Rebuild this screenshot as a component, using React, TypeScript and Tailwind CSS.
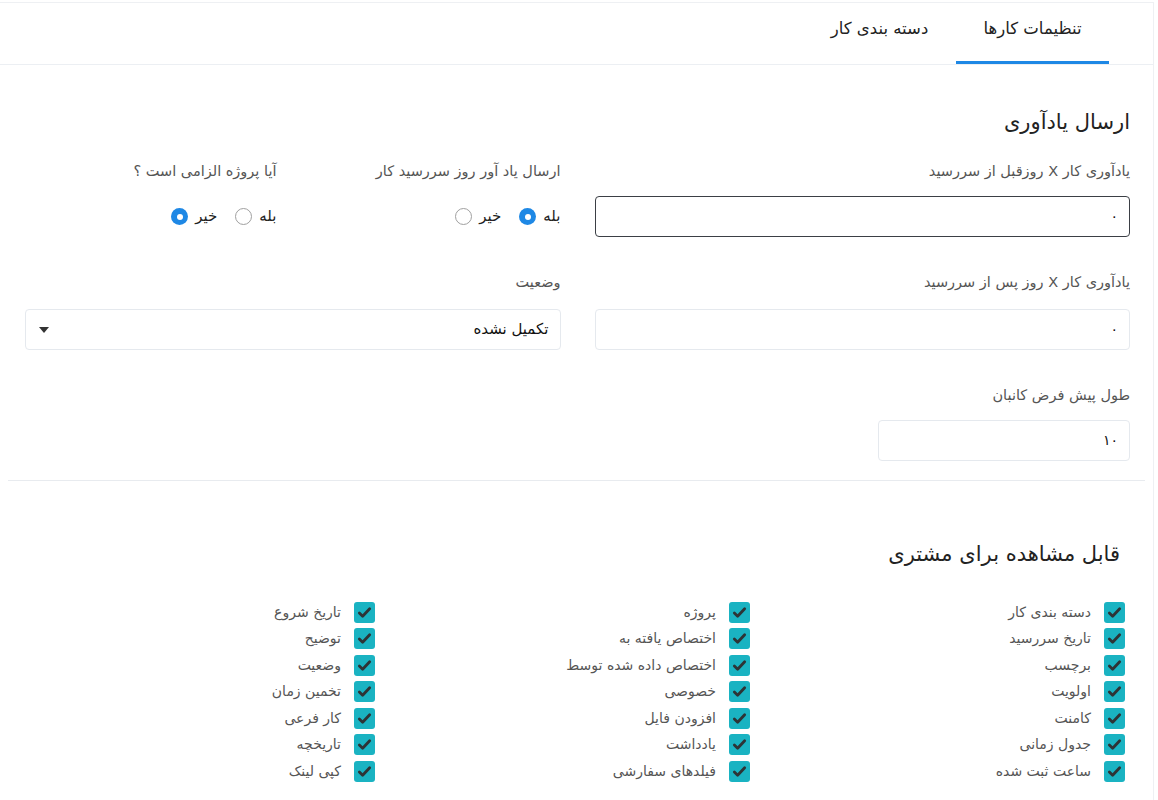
import React, { useState } from "react";

const font = { fontFamily: '"DejaVu Sans", "Noto Sans", sans-serif' };

const visibleCols: string[][] = [
  ["دسته بندی کار", "تاریخ سررسید", "برچسب", "اولویت", "کامنت", "جدول زمانی", "ساعت ثبت شده"],
  ["پروژه", "اختصاص یافته به", "اختصاص داده شده توسط", "خصوصی", "افزودن فایل", "یادداشت", "فیلدهای سفارشی"],
  ["تاریخ شروع", "توضیح", "وضعیت", "تخمین زمان", "کار فرعی", "تاریخچه", "کپی لینک"],
];

const Radio = ({ checked, label }: { checked?: boolean; label: string }) => (
  <label className="flex items-center gap-[7px] text-[15px] text-[#222]">
    <span>{label}</span>
    <span
      className={
        checked
          ? "w-[17px] h-[17px] rounded-full bg-[#1e88e5] flex items-center justify-center"
          : "w-[17px] h-[17px] rounded-full border border-[#a0a0a0] bg-white"
      }
    >
      {checked && <span className="w-[6px] h-[6px] rounded-full bg-white" />}
    </span>
  </label>
);

const Check = ({ label }: { label: string }) => (
  <div className="flex items-center gap-[13px] h-[26.5px]">
    <span className="w-[21px] h-[21px] rounded-[3px] bg-[#1ab3c2] flex items-center justify-center">
      <svg width="15" height="15" viewBox="0 0 16 16">
        <path d="M2.5 8.5l3.5 3.5 7.5-8" fill="none" stroke="#2d3436" strokeWidth="3" strokeLinecap="round" strokeLinejoin="round" />
      </svg>
    </span>
    <span className="text-[14px] text-[#555]">{label}</span>
  </div>
);

const Label = ({ children, mb = "mb-[15px]" }: { children: React.ReactNode; mb?: string }) => (
  <div className={"text-[14.5px] leading-5 text-[#555] " + mb}>{children}</div>
);

const Field = ({ label, value, focused, mb }: { label: string; value: string; focused?: boolean; mb?: string }) => (
  <div className="flex flex-col">
    <Label mb={mb}>{label}</Label>
    <div
      className={
        focused
          ? "h-[41px] rounded-[4px] border border-[#3b3f45] flex items-center px-[11px] text-[14px] text-[#111]"
          : "h-[41px] rounded-[4px] border border-[#e5e9ee] flex items-center px-[11px] text-[14px] text-[#111]"
      }
    >
      {value}
    </div>
  </div>
);

export default function App() {
  const [tab, setTab] = useState(0);
  const tabs = ["تنظیمات کارها", "دسته بندی کار"];

  return (
    <div dir="rtl" style={font} className="bg-white w-[1158px] h-[800px] overflow-hidden">
      <div className="mt-[2px] mr-auto w-[1154px] border-t border-r border-[#eef0f3] h-[798px]">
        <div className="flex h-[62px] border-b border-[#eceff3] pr-[44px]">
          {tabs.map((t, i) => (
            <button
              key={t}
              onClick={() => setTab(i)}
              className={
                tab === i
                  ? "w-[153px] h-full flex items-center justify-center text-[16.5px] text-[#222] border-b-[3px] border-[#1e88e5] pt-[1px]"
                  : "w-[153px] h-full flex items-center justify-center text-[16.5px] text-[#222] border-b-[3px] border-transparent pt-[1px]"
              }
            >
              <span className="-mt-[6px]">{t}</span>
            </button>
          ))}
        </div>

        <div className="pt-[43px] pr-[23px] pl-[25px]">
          <h2 className="text-[21px] leading-7 text-[#222] mb-[25px]">ارسال یادآوری</h2>

          <div className="flex gap-[34px]">
            <div className="w-[536px] flex flex-col gap-[35px]">
              <Field label="یادآوری کار X روزقبل از سررسید" value="۰" focused />
              <Field label="یادآوری کار X روز پس از سررسید" value="۰" mb="mb-[17px]" />
              <div className="w-[252px]">
                <Field label="طول پیش فرض کانبان" value="۱۰" />
              </div>
            </div>

            <div className="w-[536px] flex flex-col gap-[35px]">
              <div className="flex">
                <div className="w-[284px]">
                  <Label>ارسال یاد آور روز سررسید کار</Label>
                  <div className="h-[41px] flex items-center gap-[18px]">
                    <Radio checked label="بله" />
                    <Radio label="خیر" />
                  </div>
                </div>
                <div className="flex-1">
                  <Label>آیا پروژه الزامی است ؟</Label>
                  <div className="h-[41px] flex items-center gap-[18px]">
                    <Radio label="بله" />
                    <Radio checked label="خیر" />
                  </div>
                </div>
              </div>
              <div className="flex flex-col">
                <Label mb="mb-[17px]">وضعیت</Label>
                <div className="h-[41px] rounded-[4px] border border-[#e5e9ee] flex items-center justify-between pr-[11px] pl-[13px] text-[15px] text-[#111]">
                  <span>تکمیل نشده</span>
                  <svg width="10" height="6" viewBox="0 0 10 6">
                    <path d="M0 0h10L5 6z" fill="#333" />
                  </svg>
                </div>
              </div>
            </div>
          </div>
        </div>

        <div className="mt-[19px] mx-[8px] border-t border-[#e8ebef]" />

        <div className="pt-[59px] pr-[33px]">
          <h2 className="text-[21px] leading-7 text-[#222] mb-[31px]">قابل مشاهده برای مشتری</h2>
        </div>
        <div className="flex pr-[28px]">
          {visibleCols.map((col, i) => (
            <div key={i} className="w-[376px] flex flex-col">
              {col.map((c) => (
                <Check key={c} label={c} />
              ))}
            </div>
          ))}
        </div>
      </div>
    </div>
  );
}
